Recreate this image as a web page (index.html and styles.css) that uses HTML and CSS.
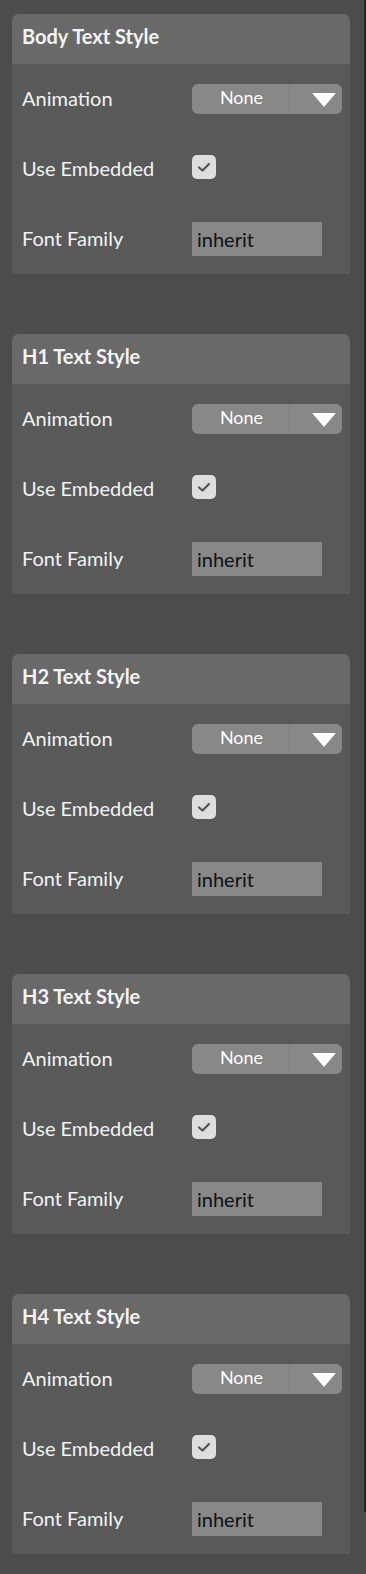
FILE: index.html
```html
<!DOCTYPE html>
<html>
<head>
<meta charset="utf-8">
<link rel="stylesheet" href="styles.css">
</head>
<body>
<div class="page">
  <div class="panel">
    <section class="card">
      <div class="card-head">Body Text Style</div>
      <div class="row"><span class="label">Animation</span>
        <div class="select"><span class="sel-val">None</span><span class="sel-arrow"><svg width="24" height="14" viewBox="0 0 24 14"><polygon points="0,0 24,0 12,14" fill="#fff"/></svg></span></div></div>
      <div class="row"><span class="label">Use Embedded</span>
        <span class="check"><svg width="14" height="12" viewBox="0 0 14 12"><polyline points="2,6.5 5.5,9.5 12,3" fill="none" stroke="#555" stroke-width="2.2" stroke-linecap="round" stroke-linejoin="round"/></svg></span></div>
      <div class="row"><span class="label">Font Family</span><span class="input">inherit</span></div>
    </section>
    <section class="card">
      <div class="card-head">H1 Text Style</div>
      <div class="row"><span class="label">Animation</span>
        <div class="select"><span class="sel-val">None</span><span class="sel-arrow"><svg width="24" height="14" viewBox="0 0 24 14"><polygon points="0,0 24,0 12,14" fill="#fff"/></svg></span></div></div>
      <div class="row"><span class="label">Use Embedded</span>
        <span class="check"><svg width="14" height="12" viewBox="0 0 14 12"><polyline points="2,6.5 5.5,9.5 12,3" fill="none" stroke="#555" stroke-width="2.2" stroke-linecap="round" stroke-linejoin="round"/></svg></span></div>
      <div class="row"><span class="label">Font Family</span><span class="input">inherit</span></div>
    </section>
    <section class="card">
      <div class="card-head">H2 Text Style</div>
      <div class="row"><span class="label">Animation</span>
        <div class="select"><span class="sel-val">None</span><span class="sel-arrow"><svg width="24" height="14" viewBox="0 0 24 14"><polygon points="0,0 24,0 12,14" fill="#fff"/></svg></span></div></div>
      <div class="row"><span class="label">Use Embedded</span>
        <span class="check"><svg width="14" height="12" viewBox="0 0 14 12"><polyline points="2,6.5 5.5,9.5 12,3" fill="none" stroke="#555" stroke-width="2.2" stroke-linecap="round" stroke-linejoin="round"/></svg></span></div>
      <div class="row"><span class="label">Font Family</span><span class="input">inherit</span></div>
    </section>
    <section class="card">
      <div class="card-head">H3 Text Style</div>
      <div class="row"><span class="label">Animation</span>
        <div class="select"><span class="sel-val">None</span><span class="sel-arrow"><svg width="24" height="14" viewBox="0 0 24 14"><polygon points="0,0 24,0 12,14" fill="#fff"/></svg></span></div></div>
      <div class="row"><span class="label">Use Embedded</span>
        <span class="check"><svg width="14" height="12" viewBox="0 0 14 12"><polyline points="2,6.5 5.5,9.5 12,3" fill="none" stroke="#555" stroke-width="2.2" stroke-linecap="round" stroke-linejoin="round"/></svg></span></div>
      <div class="row"><span class="label">Font Family</span><span class="input">inherit</span></div>
    </section>
    <section class="card">
      <div class="card-head">H4 Text Style</div>
      <div class="row"><span class="label">Animation</span>
        <div class="select"><span class="sel-val">None</span><span class="sel-arrow"><svg width="24" height="14" viewBox="0 0 24 14"><polygon points="0,0 24,0 12,14" fill="#fff"/></svg></span></div></div>
      <div class="row"><span class="label">Use Embedded</span>
        <span class="check"><svg width="14" height="12" viewBox="0 0 14 12"><polyline points="2,6.5 5.5,9.5 12,3" fill="none" stroke="#555" stroke-width="2.2" stroke-linecap="round" stroke-linejoin="round"/></svg></span></div>
      <div class="row"><span class="label">Font Family</span><span class="input">inherit</span></div>
    </section>
  </div>
  <div class="rail"></div>
</div>
</body>
</html>
```

FILE: styles.css
```css
html, body {
  margin: 0;
  padding: 0;
  background: #4b4c4e;
}
body {
  font-family: Lato, "Open Sans", sans-serif;
  color: #f2f2f2;
  width: 366px;
  height: 1574px;
  overflow: hidden;
}
.page {
  display: flex;
  height: 1574px;
}
.panel {
  width: 338px;
  margin-left: 12px;
  padding-top: 14px;
  display: flex;
  flex-direction: column;
  gap: 60px;
}
.rail {
  width: 2px;
  height: 1512px;
  margin-left: 14px;
  background: #262728;
}
.card {
  background: #595959;
  border-radius: 7px 7px 0 0;
  height: 260px;
}
.card-head {
  height: 50px;
  background: #696969;
  border-radius: 7px 7px 0 0;
  box-sizing: border-box;
  padding: 9px 0 0 10px;
  font-size: 20px;
  font-weight: 700;
  line-height: 26px;
  color: #f4f4f4;
}
.row {
  height: 70px;
  display: flex;
  align-items: center;
  padding-left: 10px;
}
.label {
  width: 170px;
  font-size: 20px;
  line-height: 24px;
  margin-top: -2px;
}
.select {
  width: 150px;
  height: 30px;
  background: #888888;
  border-radius: 6px;
  display: flex;
  overflow: hidden;
}
.sel-val {
  width: 95px;
  padding-left: 2px;
  text-align: center;
  font-size: 18px;
  line-height: 26px;
  color: #fff;
  border-right: 1px solid #7e7e7e;
}
.sel-arrow {
  flex: 1;
  display: flex;
  align-items: center;
  justify-content: flex-end;
  padding-right: 6px;
  padding-top: 1px;
}
.check {
  width: 24px;
  height: 24px;
  border-radius: 5px;
  background: #dedede;
  display: flex;
  align-items: center;
  justify-content: center;
  margin-top: -4px;
}
.input {
  width: 130px;
  height: 34px;
  box-sizing: border-box;
  background: #888888;
  color: #111;
  font-size: 20px;
  line-height: 34px;
  padding-left: 5px;
}
```
